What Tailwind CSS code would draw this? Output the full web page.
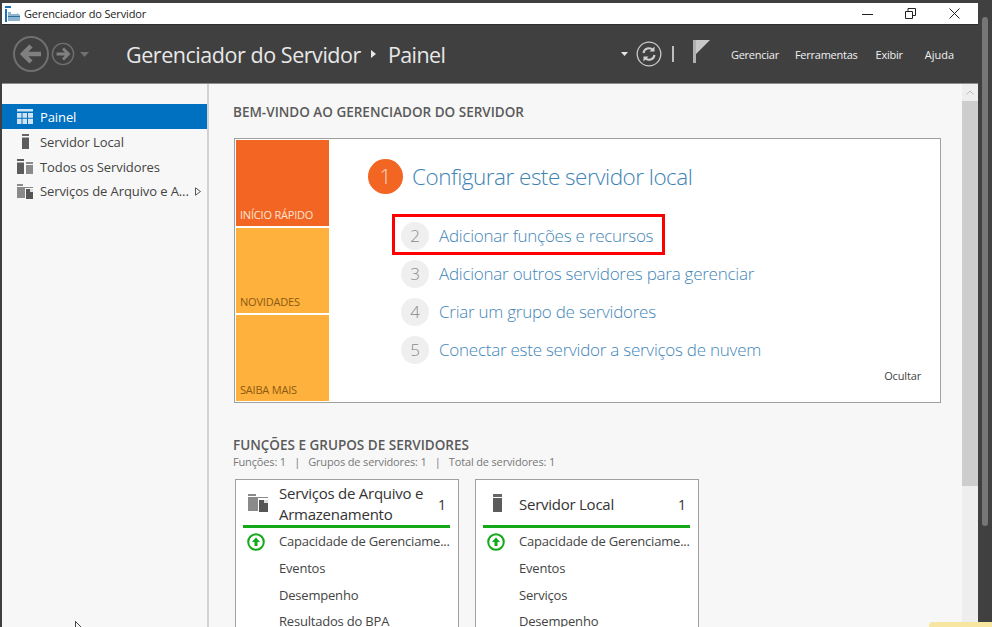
<!DOCTYPE html>
<html lang="en">
<head>
  <meta charset="UTF-8">
  <title>Gerenciador do Servidor</title>
  <script src="https://cdn.jsdelivr.net/npm/@tailwindcss/browser@4"></script>
</head>
<body class="w-[992px] h-[627px] overflow-hidden bg-[#404040] font-['Open_Sans',sans-serif] relative">

  <div class="flex h-[627px] pt-[3px] pl-[2px]">
    <!-- window -->
    <div class="w-[976px] flex flex-col shrink-0 h-[624px]">
      <!-- title bar -->
      <div class="h-[21px] bg-white flex items-center shrink-0 text-[#222]">
        <svg class="ml-[3px] w-[15px] h-[16px]" viewBox="0 0 15 16">
          <path d="M0 0h6v2H0zM0 3h2v13H0z" fill="#1a72b8"/>
          <path d="M3 6h3v2h6v-1l3 2v6H3z" fill="#8fb4cf"/>
          <path d="M3 10h12v1H3z" fill="#2a6f9e"/>
        </svg>
        <span class="ml-[4px] mt-[1px] text-[11px] tracking-[-0.15px]">Gerenciador do Servidor</span>
        <div class="ml-auto flex items-center mr-[18px]">
          <svg class="w-[11px] h-[12px] mr-[32px]" viewBox="0 0 11 12"><path d="M0 6.500h11" stroke="#222" fill="none"/></svg>
          <svg class="w-[11px] h-[11px] mr-[33px]" viewBox="0 0 11 11"><path d="M.5 3.500h7v7h-7zM3 3.500V.5h7.500v7H7.500" stroke="#222" fill="none"/></svg>
          <svg class="w-[11px] h-[11px]" viewBox="0 0 11 11"><path d="M.5.500l10 10M10.500.500l-10 10" stroke="#222" fill="none"/></svg>
        </div>
      </div>

      <!-- header -->
      <div class="h-[60px] bg-[#404040] border-t border-[#2e2e2e] border-b border-b-[#8c8c8c] flex items-center shrink-0 text-white">
        <svg class="ml-[11px] w-[36px] h-[38px]" viewBox="0 0 36 38" fill="none">
          <circle cx="18" cy="19" r="17" stroke="#6f6f6f" stroke-width="2"/>
          <path d="M28 19H10M18 11l-8 8 8 8" stroke="#808080" stroke-width="4.500"/>
        </svg>
        <svg class="ml-[2px] w-[24px] h-[24px]" viewBox="0 0 26 26" fill="none">
          <circle cx="13" cy="13" r="11.500" stroke="#6f6f6f" stroke-width="1.500"/>
          <path d="M6 13h12M13 7l6 6-6 6" stroke="#808080" stroke-width="3"/>
        </svg>
        <svg class="ml-[5px] w-[9px] h-[5px]" viewBox="0 0 9 5"><path d="M0 0h9L4.500 5z" fill="#707070"/></svg>
        <span class="ml-[37px] mt-[3px] text-[21.500px] tracking-[-0.45px] text-[#e8e8e8] whitespace-nowrap">Gerenciador do Servidor</span>
        <svg class="ml-[10px] w-[6px] h-[8px]" viewBox="0 0 6 8"><path d="M0 0l5 4-5 4z" fill="#e8e8e8"/></svg>
        <span class="ml-[11px] mt-[3px] text-[21.500px] tracking-[-0.6px] text-[#e8e8e8]">Painel</span>

        <div class="ml-auto flex items-center mr-[24px]">
          <svg class="w-[7px] h-[4px]" viewBox="0 0 7 4"><path d="M0 0h7L3.500 4z" fill="#e6e6e6"/></svg>
          <svg class="ml-[8px] w-[26px] h-[26px]" viewBox="0 0 26 26" fill="none">
            <circle cx="13" cy="13" r="11.800" stroke="#c8c8c8" stroke-width="1.300"/>
            <path d="M7.500 12a5.500 5.500 0 0 1 9.500-3M18.500 14a5.500 5.500 0 0 1-9.500 3" stroke="#cfcfcf" stroke-width="2"/>
            <path d="M18.500 5.500v5h-5zM7.500 20.500v-5h5z" fill="#cfcfcf"/>
          </svg>
          <div class="ml-[10px] w-[2px] h-[16px] bg-[#bdbdbd]"></div>
          <svg class="ml-[19px] w-[17px] h-[23px] -mt-[5px]" viewBox="0 0 17 23"><path d="M0 0h3v23H0z" fill="#b0b0b0"/><path d="M3 0h14L3 14z" fill="#c8c8c8"/></svg>
          <nav class="ml-[21px] mt-[2px] flex items-center text-[11px] tracking-[-0.25px] text-[#f0f0f0]">
            <span>Gerenciar</span>
            <span class="ml-[16px]">Ferramentas</span>
            <span class="ml-[18px]">Exibir</span>
            <span class="ml-[22px] tracking-[0px]">Ajuda</span>
          </nav>
        </div>
      </div>

      <!-- body -->
      <div class="flex flex-1 min-h-0 bg-[#f7f7f7]">
        <!-- sidebar -->
        <aside class="w-[207px] shrink-0 border-r-2 border-[#d2d2d2] pt-[20px] text-[13px] tracking-[-0.1px] text-[#444]">
          <div class="h-[25px] w-[205px] bg-[#0070c0] text-white flex items-center">
            <svg class="ml-[15px] w-[16px] h-[15px]" viewBox="0 0 16 15">
              <path d="M0 0h16v2.500H0zM0 4h4.500v4.700H0zM5.500 4H10v4.700H5.500zM11 4h5v4.700h-5zM0 9.800h4.500V15H0zM5.500 9.800H10V15H5.500zM11 9.800h5V15h-5z" fill="#cfe3f3"/>
            </svg>
            <span class="ml-[7px] mt-[2px]">Painel</span>
          </div>
          <div class="h-[25px] flex items-center">
            <svg class="ml-[20px] w-[7px] h-[15px]" viewBox="0 0 7 15"><path d="M0 0h7v2H0z" fill="#666"/><path d="M0 3.500h7V15H0z" fill="#5c5c5c"/></svg>
            <span class="ml-[11px] mt-[2px]">Servidor Local</span>
          </div>
          <div class="h-[25px] flex items-center">
            <svg class="ml-[15px] w-[16px] h-[15px]" viewBox="0 0 16 15"><path d="M0 0h7v2H0zM0 3.500h7V15H0z" fill="#5c5c5c"/><path d="M9 3h7v2H9zM9 6h7v9H9z" fill="#8a8a8a"/></svg>
            <span class="ml-[7px] mt-[2px]">Todos os Servidores</span>
          </div>
          <div class="h-[25px] flex items-center">
            <svg class="ml-[15px] w-[16px] h-[15px]" viewBox="0 0 16 15"><path d="M0 0h6v2H0zM0 3h16v1H0zM0 4h8v10H0z" fill="#8a8a8a"/><path d="M9 5h7v10H9z" fill="#555"/><path d="M13 5h3v3h-3z" fill="#ddd"/></svg>
            <span class="ml-[7px] mt-[1px] whitespace-nowrap">Serviços de Arquivo e A...</span>
            <svg class="ml-[6px] w-[6px] h-[9px]" viewBox="0 0 6 9"><path d="M.5.800l5 3.700-5 3.700z" fill="none" stroke="#555"/></svg>
          </div>
        </aside>

        <!-- main -->
        <main class="flex-1 min-w-0 pl-[24px] overflow-hidden">
          <h2 class="mt-[19px] text-[13.500px] leading-[18px] font-semibold text-[#5a5a5a]">BEM-VINDO AO GERENCIADOR DO SERVIDOR</h2>

          <!-- quick start panel -->
          <section class="mt-[17px] ml-[1px] w-[707px] h-[265px] bg-white border border-[#a0a0a0] p-[1px] flex">
            <div class="w-[93px] flex flex-col gap-[2px] text-[11px] tracking-[-0.2px] shrink-0">
              <div class="h-[86px] bg-[#f36523] text-[#fce4d4] flex items-end pl-[4px] pb-[2px]">INÍCIO RÁPIDO</div>
              <div class="h-[86px] bg-[#ffb13d] text-[#8a5a12] flex items-end pl-[4px] pb-[3px]">NOVIDADES</div>
              <div class="h-[86px] bg-[#ffb13d] text-[#8a5a12] flex items-end pl-[4px] pb-[3px]">SAIBA MAIS</div>
            </div>
            <div class="flex-1 relative pl-[39px]">
              <div class="flex items-center mt-[19px] h-[35px]">
                <div class="w-[35px] h-[35px] rounded-full bg-[#f36523] text-[#fbd9c5] text-[21px] font-light flex items-center justify-center">1</div>
                <span class="ml-[9px] text-[22.500px] tracking-[-0.5px] text-[#3d83b5] font-light">Configurar este servidor local</span>
              </div>
              <div class="mt-[28px] flex flex-col gap-[10px] text-[#3f86b8] text-[17px] font-light tracking-[-0.25px] ml-[33px]">
                <div class="relative flex items-center h-[28px]">
                  <div class="absolute left-[-9px] top-[-8px] w-[273px] h-[41px] border-[3px] border-[#ff0000]"></div>
                  <div class="w-[28px] h-[28px] rounded-full bg-[#efefef] text-[#8a8a8a] flex items-center justify-center">2</div>
                  <span class="ml-[10px]">Adicionar funções e recursos</span>
                </div>
                <div class="flex items-center h-[28px]">
                  <div class="w-[28px] h-[28px] rounded-full bg-[#efefef] text-[#8a8a8a] flex items-center justify-center">3</div>
                  <span class="ml-[10px]">Adicionar outros servidores para gerenciar</span>
                </div>
                <div class="flex items-center h-[28px]">
                  <div class="w-[28px] h-[28px] rounded-full bg-[#efefef] text-[#8a8a8a] flex items-center justify-center">4</div>
                  <span class="ml-[10px]">Criar um grupo de servidores</span>
                </div>
                <div class="flex items-center h-[28px]">
                  <div class="w-[28px] h-[28px] rounded-full bg-[#efefef] text-[#8a8a8a] flex items-center justify-center">5</div>
                  <span class="ml-[10px]">Conectar este servidor a serviços de nuvem</span>
                </div>
              </div>
              <div class="absolute right-[18px] bottom-[17px] text-[11px] tracking-[-0.15px] text-[#444]">Ocultar</div>
            </div>
          </section>

          <!-- roles -->
          <h2 class="mt-[33px] text-[13.500px] leading-[18px] font-semibold text-[#5a5a5a]">FUNÇÕES E GRUPOS DE SERVIDORES</h2>
          <div class="mt-[1px] text-[11px] leading-[14px] text-[#777] tracking-[-0.15px] whitespace-nowrap">Funções: 1&nbsp;&nbsp;&nbsp;|&nbsp;&nbsp;&nbsp;Grupos de servidores: 1&nbsp;&nbsp;&nbsp;|&nbsp;&nbsp;&nbsp;Total de servidores: 1</div>

          <div class="mt-[10px] ml-[2px] flex gap-[16px]">
            <div class="w-[224px] h-[160px] bg-white border border-[#a0a0a0] text-[#444]">
              <div class="ml-[7px] mr-[8px] h-[48px] border-b-[3px] border-[#13a818] flex items-center">
                <svg class="ml-[5px] w-[20px] h-[18px] shrink-0" viewBox="0 0 20 18"><path d="M0 0h8v2H0zM0 3h20v1H0zM0 4h10v13H0z" fill="#8a8a8a"/><path d="M11 6h9v12h-9z" fill="#555"/><path d="M16 6h4v3h-4z" fill="#ddd"/></svg>
                <span class="ml-[11px] mt-[2px] text-[15px] leading-[21px] w-[155px] tracking-[-0.25px] shrink-0 text-[#333]">Serviços de Arquivo e Armazenamento</span>
                <span class="ml-auto mr-[4px] mt-[3px] text-[14px] text-[#333]">1</span>
              </div>
              <div class="text-[13px] tracking-[-0.2px]">
                <div class="h-[27px] flex items-center pl-[11px]">
                  <svg class="w-[18px] h-[18px]" viewBox="0 0 18 18" fill="none"><circle cx="9" cy="9" r="7.800" stroke="#13a818" stroke-width="2"/><path d="M9 4.500l4 4.500h-2.500v4h-3V9H5z" fill="#13a818"/></svg>
                  <span class="ml-[14px] whitespace-nowrap">Capacidade de Gerenciame...</span>
                </div>
                <div class="h-[27px] flex items-center pl-[43px]">Eventos</div>
                <div class="h-[27px] flex items-center pl-[43px]">Desempenho</div>
                <div class="h-[26px] flex items-center pl-[43px]">Resultados do BPA</div>
              </div>
            </div>
            <div class="w-[224px] h-[160px] bg-white border border-[#a0a0a0] text-[#444]">
              <div class="ml-[7px] mr-[8px] h-[48px] border-b-[3px] border-[#13a818] flex items-center">
                <svg class="ml-[10px] w-[9px] h-[18px] shrink-0" viewBox="0 0 9 18"><path d="M0 0h9v3H0z" fill="#666"/><path d="M0 4h9v14H0z" fill="#5c5c5c"/></svg>
                <span class="ml-[17px] mt-[3px] text-[15px] tracking-[-0.25px] text-[#333]">Servidor Local</span>
                <span class="ml-auto mr-[4px] mt-[3px] text-[14px] text-[#333]">1</span>
              </div>
              <div class="text-[13px] tracking-[-0.2px]">
                <div class="h-[27px] flex items-center pl-[11px]">
                  <svg class="w-[18px] h-[18px]" viewBox="0 0 18 18" fill="none"><circle cx="9" cy="9" r="7.800" stroke="#13a818" stroke-width="2"/><path d="M9 4.500l4 4.500h-2.500v4h-3V9H5z" fill="#13a818"/></svg>
                  <span class="ml-[14px] whitespace-nowrap">Capacidade de Gerenciame...</span>
                </div>
                <div class="h-[27px] flex items-center pl-[43px]">Eventos</div>
                <div class="h-[27px] flex items-center pl-[43px]">Serviços</div>
                <div class="h-[26px] flex items-center pl-[43px]">Desempenho</div>
              </div>
            </div>
          </div>
        </main>

        <!-- inner scrollbar -->
        <div class="w-[16px] shrink-0 bg-[#eeeeee] flex flex-col">
          <div class="h-[17px] flex items-center justify-center">
            <svg class="w-[8px] h-[5px]" viewBox="0 0 8 5"><path d="M.5 4.500L4 1l3.500 3.500" fill="none" stroke="#bbb"/></svg>
          </div>
          <div class="h-[385px] bg-[#cdcdcd]"></div>
        </div>
      </div>
    </div>

    <!-- outer scrollbar, dark strip -->
    <div class="flex-1 pl-[4px] pt-[14px]">
      <div class="w-[6px] h-[509px] rounded-full bg-[#767676]"></div>
    </div>
  </div>

  <!-- bits lying over the window -->
  <div class="absolute left-[929px] top-[622px] w-[63px] h-[5px] bg-[#f7e6a2] rounded-tl-sm"></div>
  <svg class="absolute left-[75px] top-[621px] w-[8px] h-[6px]" viewBox="0 0 8 6"><path d="M.5 0v6M.5 .5L6 6" stroke="#444" fill="none"/></svg>
</body>
</html>
